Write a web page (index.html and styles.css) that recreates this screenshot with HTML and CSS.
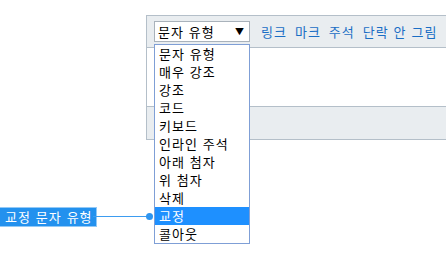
FILE: index.html
```html
<!DOCTYPE html>
<html>
<head>
    <title>교정 문자 유형</title>
    <link rel="stylesheet" href="styles.css">
</head>
<body>
    <div class="editor">
        <div class="toolbar">
            <div class="select">
                <span>문자 유형</span>
                <span class="arrow">▼</span>
            </div>
            <a href="#" class="tool-link">링크</a>
            <a href="#" class="tool-link">마크</a>
            <a href="#" class="tool-link">주석</a>
            <a href="#" class="tool-link">단락 안 그림</a>
        </div>
        <div class="content"></div>
        <div class="footer"></div>
    </div>

    <ul class="options">
        <li>문자 유형</li>
        <li>매우 강조</li>
        <li>강조</li>
        <li>코드</li>
        <li>키보드</li>
        <li>인라인 주석</li>
        <li>아래 첨자</li>
        <li>위 첨자</li>
        <li>삭제</li>
        <li class="selected">교정</li>
        <li>콜아웃</li>
    </ul>

    <div class="callout">교정 문자 유형</div>
    <div class="leader"></div>
    <div class="dot"></div>
</body>
</html>
```

FILE: styles.css
```css
body { margin: 0; font-family: "Noto Sans CJK KR", "Noto Sans", sans-serif; font-size: 13px; letter-spacing: 1px; word-spacing: 1px; color: #000; }
.editor { margin: 15px 0 0 146px; width: 299px; border: 1px solid #b4bfc9; border-right: none; }
.toolbar { display: flex; align-items: center; gap: 8px; height: 31px; padding: 0 7px; background: #e9edf0; border-bottom: 1px solid #b4bfc9; }
.select { display: flex; justify-content: space-between; align-items: center; width: 87px; height: 19px; padding: 0 4px 0 3px; background: #fff; border: 1px solid #a9b2bb; margin-right: 3px; line-height: 19px; }
.arrow { font-size: 9px; }
.tool-link { color: #1a6ec5; text-decoration: none; line-height: 18px; }
.content { height: 58px; background: #fff; }
.footer { height: 32px; background: #e9edf0; border-top: 1px solid #b4bfc9; }
.options { position: absolute; left: 154px; top: 44px; width: 94px; margin: 0; padding: 0; list-style: none; background: #fff; border: 1px solid #7f9fd6; }
.options li { height: 18px; line-height: 18px; padding-left: 4px; white-space: nowrap; }
.options .selected { background: #1e90ff; color: #fff; }
.callout { position: absolute; left: 0; top: 207px; height: 18px; line-height: 18px; padding: 0 3px 0 5px; background: #2391ee; color: #fff; border: 1px solid #93c9f6; border-left: none; white-space: nowrap; }
.leader { position: absolute; left: 93px; top: 216px; width: 55px; height: 1px; background: #3d9cf0; }
.dot { position: absolute; left: 146px; top: 213px; width: 7px; height: 7px; border-radius: 50%; background: #2e95f0; }
```
